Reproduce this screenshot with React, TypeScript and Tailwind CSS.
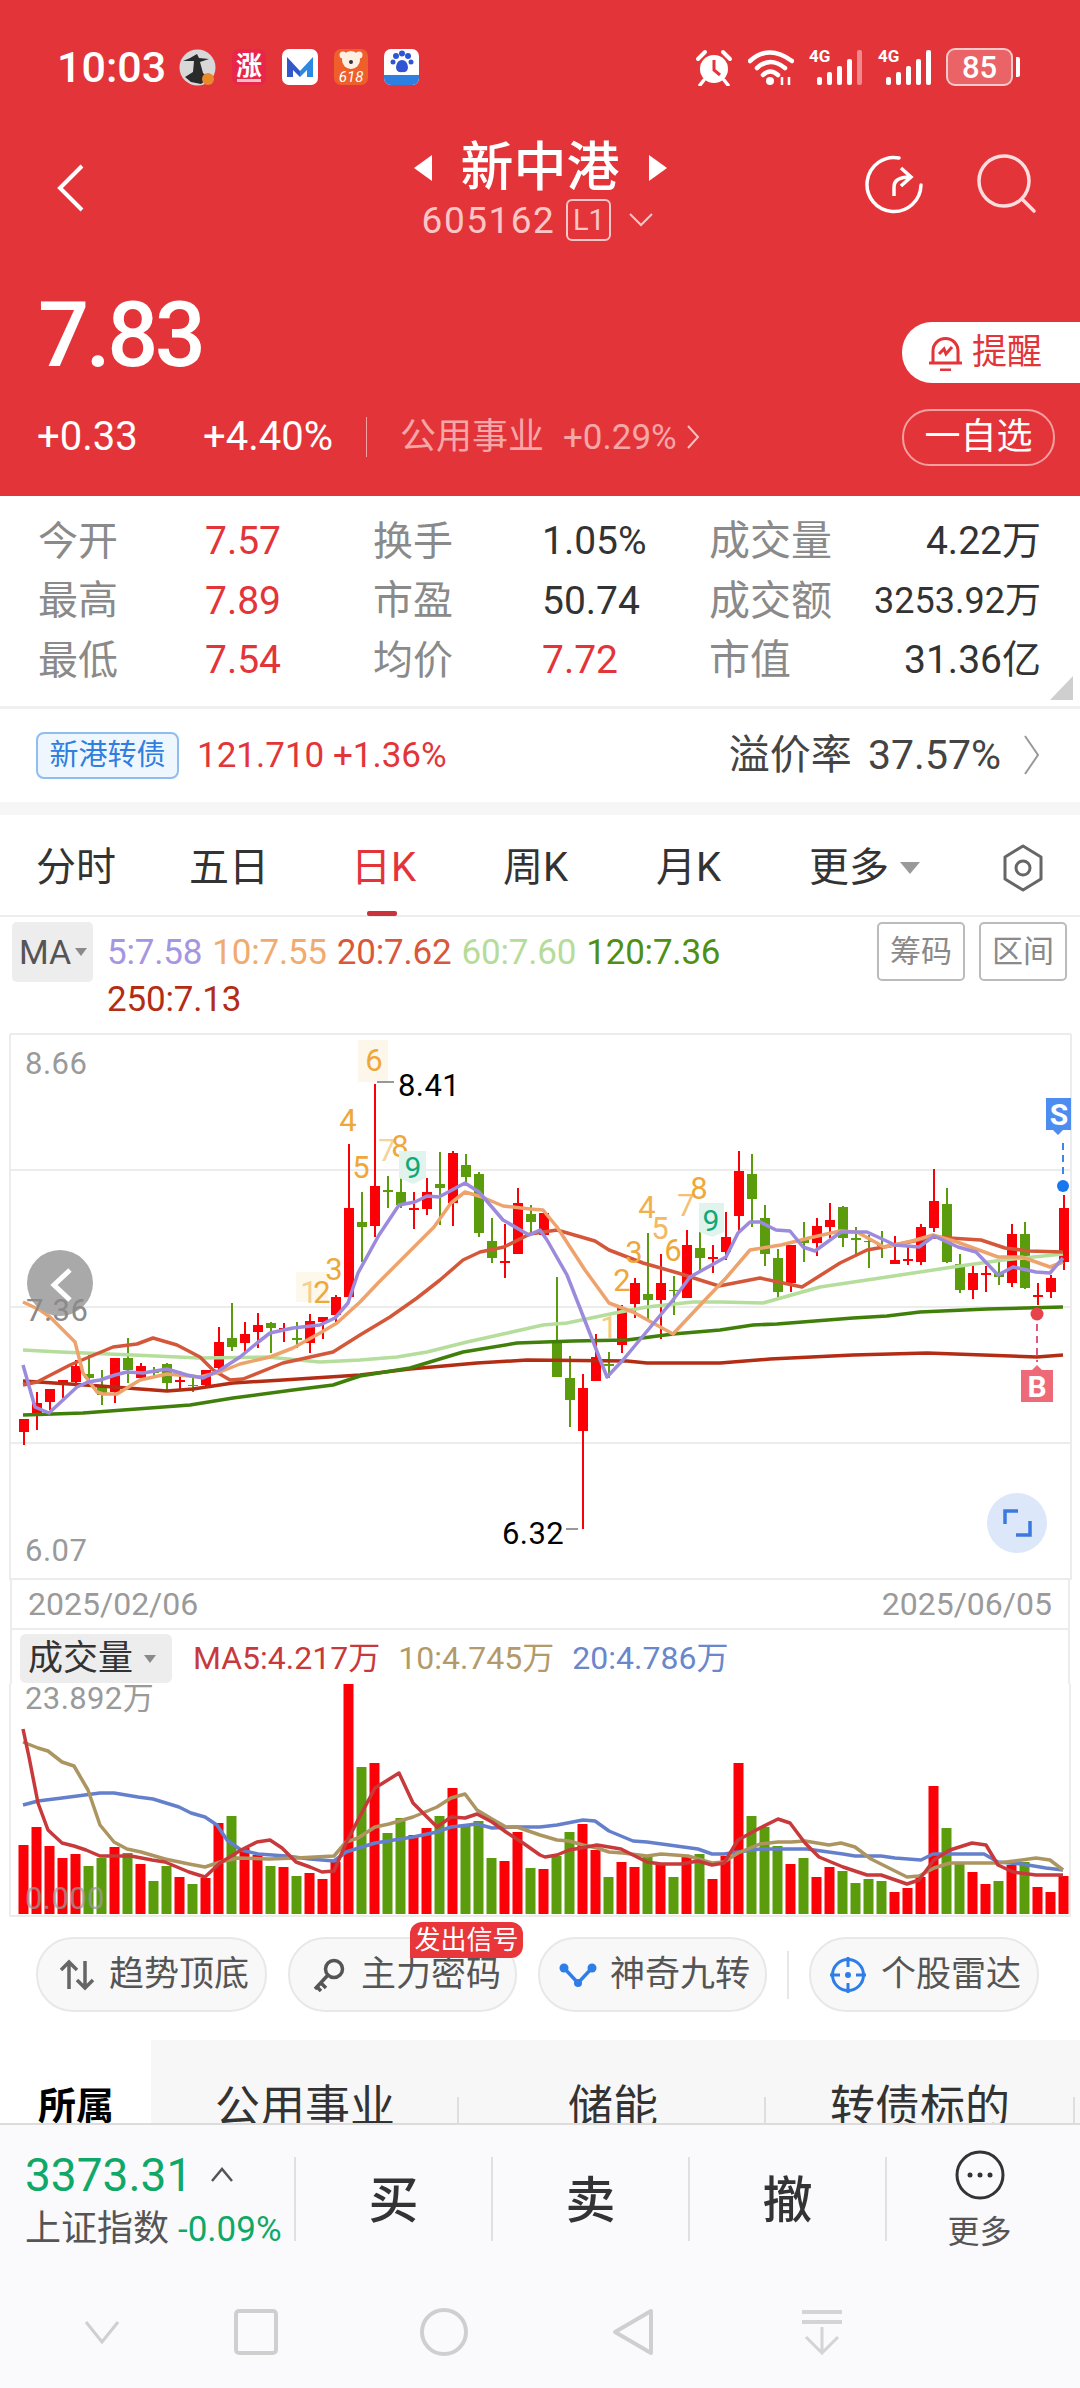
import { ReactNode } from "react";

const RED = "#fb0006";
const GREEN = "#5a9c0c";

// [colour, high, body top, body bottom, low] in page pixels
const candles: [string, number, number, number, number][] = [
  ["r", 1419, 1419, 1432, 1445], ["r", 1392, 1403, 1415, 1430], ["r", 1389, 1389, 1402, 1410], ["r", 1380, 1380, 1385, 1398],
  ["r", 1360, 1366, 1382, 1387], ["g", 1355, 1374, 1378, 1380], ["g", 1370, 1385, 1395, 1405], ["r", 1358, 1358, 1392, 1403],
  ["g", 1338, 1358, 1370, 1383], ["r", 1363, 1366, 1378, 1378], ["g", 1367, 1372, 1373, 1378], ["g", 1363, 1364, 1383, 1390],
  ["r", 1371, 1380, 1382, 1390], ["g", 1378, 1385, 1386, 1392], ["r", 1370, 1370, 1385, 1387], ["r", 1327, 1342, 1368, 1372],
  ["g", 1303, 1338, 1347, 1351], ["r", 1322, 1334, 1343, 1352], ["r", 1313, 1325, 1332, 1348], ["g", 1322, 1323, 1328, 1353],
  ["r", 1323, 1328, 1330, 1342], ["g", 1322, 1338, 1340, 1348], ["r", 1314, 1321, 1343, 1353], ["r", 1317, 1317, 1322, 1339],
  ["r", 1295, 1297, 1315, 1323], ["r", 1144, 1208, 1297, 1303], ["g", 1192, 1222, 1227, 1262], ["r", 1084, 1186, 1226, 1237],
  ["g", 1176, 1190, 1192, 1208], ["g", 1169, 1192, 1205, 1208], ["r", 1192, 1208, 1210, 1229], ["r", 1178, 1192, 1209, 1215],
  ["g", 1152, 1184, 1188, 1225], ["r", 1151, 1153, 1203, 1226], ["g", 1154, 1165, 1177, 1185], ["g", 1172, 1174, 1233, 1237],
  ["g", 1218, 1241, 1258, 1263], ["r", 1224, 1261, 1263, 1278], ["r", 1188, 1203, 1254, 1254], ["g", 1205, 1214, 1222, 1232],
  ["r", 1213, 1213, 1235, 1235], ["g", 1277, 1340, 1377, 1377], ["g", 1356, 1378, 1400, 1427], ["r", 1374, 1388, 1431, 1529],
  ["r", 1334, 1357, 1381, 1381], ["g", 1352, 1364, 1366, 1378], ["r", 1305, 1308, 1345, 1353], ["r", 1278, 1283, 1304, 1318],
  ["g", 1233, 1294, 1300, 1320], ["r", 1254, 1283, 1300, 1339], ["g", 1276, 1290, 1291, 1315], ["r", 1230, 1245, 1298, 1298],
  ["g", 1213, 1248, 1258, 1272], ["r", 1245, 1257, 1259, 1273], ["r", 1212, 1237, 1252, 1260], ["r", 1151, 1171, 1216, 1233],
  ["g", 1154, 1174, 1199, 1227], ["g", 1205, 1218, 1254, 1266], ["g", 1249, 1258, 1292, 1297], ["r", 1245, 1245, 1283, 1292],
  ["g", 1222, 1240, 1243, 1262], ["r", 1218, 1226, 1243, 1256], ["r", 1203, 1220, 1227, 1238], ["g", 1206, 1207, 1238, 1247],
  ["g", 1227, 1238, 1240, 1255], ["g", 1235, 1241, 1242, 1268], ["g", 1231, 1245, 1246, 1258], ["r", 1236, 1260, 1264, 1264],
  ["r", 1245, 1259, 1261, 1265], ["r", 1224, 1227, 1262, 1265], ["r", 1169, 1201, 1228, 1232], ["g", 1188, 1204, 1262, 1263],
  ["g", 1254, 1264, 1290, 1293], ["r", 1266, 1273, 1290, 1299], ["r", 1266, 1273, 1275, 1292], ["g", 1262, 1273, 1277, 1285],
  ["r", 1224, 1234, 1283, 1287], ["g", 1222, 1234, 1288, 1289], ["r", 1283, 1295, 1297, 1305], ["r", 1275, 1278, 1292, 1298],
  ["r", 1195, 1208, 1262, 1270],
];

const ma5 = "23,1365 35,1407 49,1413 77,1387 88,1382 100,1380 115,1375 127,1372 143,1373 167,1369 187,1375 203,1378 220,1370 240,1357 257,1343 270,1333 293,1328 320,1325 335,1318 348,1303 358,1273 379,1235 399,1205 415,1202 427,1196 439,1197 465,1183 479,1192 503,1220 529,1235 540,1230 547,1240 567,1275 607,1377 623,1360 673,1300 690,1277 726,1257 738,1233 750,1222 760,1222 776,1230 790,1231 803,1247 815,1251 841,1232 867,1232 895,1245 919,1247 934,1236 958,1247 976,1252 998,1275 1013,1267 1036,1272 1050,1273 1063,1258";
const ma10 = "23,1302 40,1310 50,1317 75,1342 83,1373 97,1392 103,1394 117,1394 140,1380 167,1374 200,1377 220,1372 240,1364 270,1357 293,1348 320,1333 337,1323 360,1302 379,1282 413,1248 434,1227 451,1203 465,1192 482,1197 503,1206 530,1209 543,1210 557,1227 585,1270 609,1303 633,1312 673,1334 705,1300 726,1278 750,1250 781,1245 809,1238 840,1231 857,1232 884,1247 912,1241 933,1235 957,1242 998,1257 1022,1257 1050,1267 1063,1262";
const ma20 = "23,1385 37,1382 70,1365 113,1347 137,1344 153,1338 177,1345 200,1357 213,1370 230,1380 243,1379 283,1363 333,1352 360,1335 390,1317 417,1298 440,1280 463,1260 480,1252 504,1247 530,1234 557,1230 595,1241 609,1250 643,1263 678,1273 719,1286 760,1278 802,1287 840,1263 867,1250 895,1245 933,1237 981,1240 1005,1248 1029,1251 1063,1252";
const ma60 = "23,1350 60,1352 133,1355 200,1358 267,1357 320,1362 360,1360 397,1357 427,1352 467,1342 503,1334 543,1325 567,1323 620,1312 647,1307 693,1302 720,1302 763,1303 820,1287 887,1277 953,1267 1003,1260 1063,1254";
const ma120 = "23,1415 83,1413 190,1405 233,1398 293,1390 333,1385 360,1376 410,1368 463,1352 517,1343 573,1341 627,1340 673,1334 720,1330 753,1325 777,1324 853,1318 887,1316 920,1312 987,1309 1063,1307";
const ma250 = "23,1381 100,1386 167,1391 193,1389 233,1383 283,1380 360,1375 410,1369 477,1363 527,1360 627,1361 647,1363 720,1363 770,1359 853,1355 927,1353 1037,1357 1063,1355";

const volumes: [string, number][] = [
  ["r", 1845], ["r", 1827], ["r", 1846], ["r", 1858], ["r", 1854], ["g", 1866], ["g", 1858], ["r", 1847], ["g", 1853], ["r", 1864],
  ["g", 1881], ["g", 1866], ["r", 1877], ["g", 1884], ["r", 1878], ["r", 1823], ["g", 1816], ["r", 1848], ["r", 1855], ["g", 1866],
  ["r", 1867], ["g", 1876], ["r", 1873], ["r", 1879], ["r", 1862], ["r", 1683], ["g", 1767], ["r", 1763], ["g", 1833], ["g", 1818],
  ["r", 1835], ["r", 1828], ["g", 1816], ["r", 1788], ["g", 1825], ["g", 1821], ["g", 1858], ["r", 1861], ["r", 1832], ["g", 1868],
  ["r", 1869], ["g", 1856], ["g", 1832], ["r", 1824], ["r", 1850], ["g", 1877], ["r", 1862], ["r", 1867], ["g", 1857], ["r", 1865],
  ["g", 1877], ["r", 1857], ["g", 1854], ["r", 1879], ["r", 1856], ["r", 1763], ["g", 1816], ["g", 1827], ["g", 1846], ["r", 1864],
  ["g", 1858], ["r", 1877], ["r", 1867], ["g", 1871], ["g", 1883], ["g", 1879], ["g", 1881], ["r", 1892], ["r", 1888], ["r", 1877],
  ["r", 1786], ["g", 1828], ["g", 1862], ["r", 1872], ["r", 1884], ["g", 1881], ["r", 1865], ["g", 1862], ["r", 1887], ["r", 1892],
  ["r", 1876],
];

const vol5 = "23,1729 29,1757 38,1803 48,1830 62,1843 74,1846 86,1850 100,1856 114,1856 131,1856 152,1860 165,1862 189,1872 205,1877 220,1863 241,1850 257,1842 270,1840 282,1848 296,1862 310,1867 322,1872 334,1871 346,1843 358,1820 375,1788 399,1773 413,1803 437,1827 451,1817 465,1818 477,1814 492,1822 506,1832 523,1843 540,1855 545,1857 557,1855 569,1850 581,1848 597,1845 621,1849 647,1862 661,1864 681,1864 698,1861 712,1865 724,1863 738,1840 760,1828 778,1819 790,1823 805,1843 819,1857 843,1867 867,1875 881,1875 907,1884 919,1880 934,1860 950,1850 972,1843 986,1845 998,1865 1013,1872 1036,1875 1063,1875";
const vol10 = "23,1742 38,1748 48,1751 62,1762 74,1766 88,1790 100,1825 114,1842 127,1849 141,1852 165,1859 189,1864 205,1867 220,1862 238,1858 269,1859 296,1858 334,1856 346,1842 358,1838 375,1827 389,1824 413,1817 437,1807 451,1798 465,1794 477,1810 492,1819 506,1827 517,1827 540,1835 557,1840 569,1841 583,1845 597,1848 609,1852 623,1853 647,1856 661,1854 688,1856 712,1863 724,1862 738,1853 760,1844 778,1842 791,1842 805,1841 829,1845 841,1843 855,1847 871,1859 895,1871 907,1877 919,1876 934,1868 950,1863 998,1863 1022,1860 1036,1858 1050,1860 1063,1870";
const vol20 = "23,1805 38,1801 62,1798 100,1793 114,1793 138,1797 153,1799 179,1807 191,1813 205,1817 217,1825 227,1840 241,1850 258,1854 286,1856 310,1859 334,1861 346,1852 375,1843 413,1837 437,1832 451,1827 477,1824 492,1828 517,1827 540,1827 557,1825 583,1820 595,1821 609,1831 633,1841 647,1842 669,1845 698,1849 712,1854 724,1854 738,1852 760,1849 807,1849 843,1854 855,1856 881,1856 895,1858 921,1860 933,1854 984,1854 998,1862 1022,1864 1046,1868 1063,1870";

const Tab = ({ children, active }: { children: ReactNode; active?: boolean }) => (
  <span className={active ? "text-[#e33539]" : "text-[#333]"}>{children}</span>
);

function AppIcons() {
  return (
    <div className="flex items-center ml-[13px] gap-[16px]">
      {/* avatar */}
      <svg width="37" height="37" viewBox="0 0 37 37">
        <circle cx="18.5" cy="18.5" r="18" fill="#d8d8d8" />
        <path d="M4 12 Q12 9 18 5 L20 9 L30 10 L21 13 L24 24 L30 29 L22 35 L12 33 L6 28 L14 23 L15 12 Z" fill="#2a2a2a" />
        <circle cx="29" cy="30" r="6" fill="#e8892c" />
      </svg>
      <div className="w-[34px] h-[36px] rounded-[7px] bg-[#e8264a] flex flex-col items-center justify-center text-white">
        <span className="text-[26px] leading-[26px] font-bold">涨</span>
        <div className="w-[24px] h-[3px] bg-[#f9c0c8]" />
      </div>
      <div className="w-[36px] h-[36px] rounded-[7px] bg-white flex items-center justify-center">
        <svg width="28" height="22" viewBox="0 0 28 22">
          <path d="M1 1 L14 15 L14 21 L7 14 L7 21 L1 21 Z" fill="#3458c8" />
          <path d="M27 1 L14 15 L14 21 L21 14 L21 21 L27 21 Z" fill="#2d88e0" />
        </svg>
      </div>
      <div className="w-[34px] h-[36px] rounded-[7px] bg-[#ee5f2c] flex flex-col items-center overflow-hidden">
        <svg width="26" height="21" viewBox="0 0 26 21">
          <circle cx="13" cy="11" r="9" fill="#fff0e4" />
          <circle cx="5" cy="6" r="3.5" fill="#fff0e4" />
          <circle cx="21" cy="6" r="3.5" fill="#fff0e4" />
          <circle cx="13" cy="13" r="2" fill="#333" />
        </svg>
        <span className="text-white text-[15px] leading-[15px] italic">618</span>
      </div>
      <div className="w-[35px] h-[36px] rounded-[7px] bg-white flex flex-col items-center overflow-hidden">
        <svg width="24" height="26" viewBox="0 0 24 26">
          <circle cx="6" cy="7" r="3" fill="#2f55d4" />
          <circle cx="12" cy="4.5" r="3" fill="#2f55d4" />
          <circle cx="18" cy="7" r="3" fill="#2f55d4" />
          <circle cx="3" cy="13" r="2.5" fill="#2f55d4" />
          <circle cx="21" cy="13" r="2.5" fill="#2f55d4" />
          <path d="M6 18 Q7 11 12 11 Q17 11 18 18 Q18 24 12 23 Q6 24 6 18 Z" fill="#2f55d4" />
        </svg>
        <div className="w-full h-[10px] bg-[#2f7fe0]" />
      </div>
    </div>
  );
}

function Signal({ dim }: { dim?: boolean }) {
  return (
    <div className="relative w-[54px] h-[38px]">
      <span className="absolute left-0 top-[-1px] text-white text-[17px] leading-[18px] font-bold">4G</span>
      <svg className="absolute left-0 top-0" width="54" height="38" viewBox="0 0 54 38">
        <rect x="8" y="29" width="5" height="8" rx="2" fill="#fff" />
        <rect x="18" y="24" width="5" height="13" rx="2" fill="#fff" />
        <rect x="28" y="18" width="5" height="19" rx="2" fill="#fff" />
        <rect x="38" y="11" width="5" height="26" rx="2" fill="#fff" />
        <rect x="48" y="2" width="5" height="35" rx="2" fill={dim ? "#f08a8c" : "#fff"} />
      </svg>
    </div>
  );
}

function StatusBar() {
  return (
    <div className="flex items-center h-[38px] mt-[48px] pl-[57px] pr-[60px] text-white">
      <span className="text-[43px] leading-none font-medium">10:03</span>
      <AppIcons />
      <div className="flex-1" />
      <div className="flex items-center gap-[15px]">
        <svg width="38" height="38" viewBox="0 0 38 38">
          <circle cx="19" cy="21" r="14" fill="#fff" />
          <path d="M19 12 V22 L25 27" stroke="#e33539" strokeWidth="3" fill="none" />
          <path d="M3 11 L10 4 M35 11 L28 4" stroke="#fff" strokeWidth="4" strokeLinecap="round" />
          <path d="M9 32 L5 37 M29 32 L33 37" stroke="#fff" strokeWidth="3.5" strokeLinecap="round" />
        </svg>
        <svg width="46" height="38" viewBox="0 0 46 38">
          <path d="M2 13 Q21 -4 44 13" stroke="#fff" strokeWidth="4.5" fill="none" strokeLinecap="round" />
          <path d="M9 20 Q22 8 37 20" stroke="#fff" strokeWidth="4.5" fill="none" strokeLinecap="round" />
          <path d="M15 27 Q22 20 30 27" stroke="#fff" strokeWidth="4.5" fill="none" strokeLinecap="round" />
          <circle cx="22" cy="33" r="4" fill="#fff" />
          <path d="M34 29 V37 M41 29 V37" stroke="#fff" strokeWidth="2.5" />
        </svg>
        <Signal dim />
        <Signal />
        <div className="flex items-center ml-[-1px]">
          <div className="w-[67px] h-[38px] rounded-[9px] border-[2.5px] border-[#f7c9ca] bg-[#ea6467] flex items-center justify-center text-[31px] leading-none font-medium">85</div>
          <div className="w-[4px] h-[20px] ml-[3px] rounded-r-[2px] bg-[#fff]" />
        </div>
      </div>
    </div>
  );
}

function Header() {
  return (
    <header className="h-[496px] bg-[#e33539] text-white flex flex-col">
      <StatusBar />
      <div className="relative h-[125px] mt-[49px]">
        <svg className="absolute left-[56px] top-[28px]" width="30" height="50" viewBox="0 0 30 50">
          <path d="M26 3 L4 25 L26 47" stroke="#fff" strokeWidth="4" fill="none" />
        </svg>
        <div className="flex flex-col items-center">
          <div className="flex items-center gap-[28px] h-[66px]">
            <svg width="20" height="28" viewBox="0 0 20 28"><path d="M19 1 V27 L1 14 Z" fill="#fff" /></svg>
            <span className="text-[53px] leading-none font-medium">新中港</span>
            <svg width="20" height="28" viewBox="0 0 20 28"><path d="M1 1 V27 L19 14 Z" fill="#fff" /></svg>
          </div>
          <div className="flex items-center mt-[-3px] h-[44px] text-[#f9c6c7] mr-[4px]">
            <span className="text-[37px] leading-none tracking-[1.5px]">605162</span>
            <span className="ml-[11px] w-[45px] h-[42px] rounded-[6px] border-2 border-[#f9c6c7] flex items-center justify-center text-[29px] leading-none">L1</span>
            <svg className="ml-[17px]" width="26" height="14" viewBox="0 0 26 14"><path d="M2 1 L13 12 L24 1" stroke="#f9c6c7" strokeWidth="2" fill="none" /></svg>
          </div>
        </div>
        <svg className="absolute left-[864px] top-[19px]" width="62" height="62" viewBox="0 0 62 62">
          <path d="M35 4 A27 27 0 1 0 57 31" stroke="#fff" strokeWidth="3.5" fill="none" strokeLinecap="round" />
          <path d="M30 42 V33 Q30 23 46 23 M37 14 L47 23 L37 32" stroke="#fff" strokeWidth="3.5" fill="none" />
        </svg>
        <svg className="absolute left-[976px] top-[18px]" width="62" height="62" viewBox="0 0 62 62">
          <circle cx="28" cy="28" r="25" stroke="#fcdcdc" strokeWidth="3.5" fill="none" />
          <path d="M46 46 L58 58" stroke="#fcdcdc" strokeWidth="3.5" strokeLinecap="round" />
        </svg>
      </div>
      <div className="flex justify-between items-start h-[79px] mt-[44px]">
        <span className="ml-[38px] mt-[1px] text-[90px] leading-[62px] h-[62px] font-medium tracking-[-3.5px]">7.83</span>
        <div className="w-[178px] h-[61px] mt-[18px] rounded-l-[30px] bg-white flex items-center text-[#e33539]">
          <svg className="ml-[27px]" width="33" height="36" viewBox="0 0 33 36">
            <path d="M4 28 V16 A12.5 12.5 0 0 1 29 16 V28 Z M1 28 H32" stroke="#e33539" strokeWidth="3" fill="none" strokeLinecap="round" />
            <path d="M11 35 H22 M10 19 L15 14 L17 19 L23 12" stroke="#e33539" strokeWidth="3" fill="none" />
          </svg>
          <span className="ml-[10px] text-[35px] leading-none">提醒</span>
        </div>
      </div>
      <div className="flex items-center h-[58px] mt-[25px]">
        <span className="ml-[37px] text-[40px] leading-none w-[166px]">+0.33</span>
        <span className="text-[40px] leading-none w-[163px]">+4.40%</span>
        <div className="w-[1px] h-[40px] bg-[#f2a2a3]" />
        <span className="ml-[33px] text-[36px] leading-none text-[#f5a7a8]">公用事业</span>
        <span className="ml-[19px] text-[35px] leading-none text-[#f5a7a8]">+0.29%</span>
        <svg className="ml-[9px]" width="14" height="28" viewBox="0 0 14 28"><path d="M2 3 L12 14 L2 25" stroke="#f5c0c0" strokeWidth="2" fill="none" /></svg>
        <div className="flex-1" />
        <div className="mr-[25px] w-[153px] h-[57px] rounded-[28px] border-2 border-[#f4a0a1] flex items-center justify-center text-[36px] leading-none">一自选</div>
      </div>
    </header>
  );
}

const rows: [string, string, string, string, string, string, boolean, boolean][] = [
  ["今开", "7.57", "换手", "1.05%", "成交量", "4.22万", false, false],
  ["最高", "7.89", "市盈", "50.74", "成交额", "3253.92万", false, true],
  ["最低", "7.54", "均价", "7.72", "市值", "31.36亿", true, false],
];

function QuoteTable() {
  return (
    <section className="relative h-[213px] border-b-[3px] border-[#f0f0f0] pt-[16px] pl-[38px] pr-[39px]">
      <div className="grid grid-cols-[167px_168px_169px_167px_124px_1fr] auto-rows-[59.5px] items-center">
        {rows.map((r) => (
          <div key={r[0]} className="contents">
            <span className="text-[40px] leading-none text-[#8a8a8a]">{r[0]}</span>
            <span className="text-[39px] leading-none text-[#e33539]">{r[1]}</span>
            <span className="text-[40px] leading-none text-[#8a8a8a]">{r[2]}</span>
            <span className={`text-[39px] leading-none ${r[6] ? "text-[#e33539]" : "text-[#333]"}`}>{r[3]}</span>
            <span className="text-[41px] leading-none text-[#8a8a8a]">{r[4]}</span>
            <span className={`text-right leading-none text-[#333] ${r[7] ? "text-[36px]" : "text-[39px]"}`}>{r[5]}</span>
          </div>
        ))}
      </div>
      <svg className="absolute left-[1050px] top-[180px]" width="24" height="24" viewBox="0 0 24 24"><path d="M23 0 V24 H0 Z" fill="#cfcfcf" /></svg>
    </section>
  );
}

function BondRow() {
  return (
    <section className="h-[93px] flex items-center pl-[36px] pr-[39px] pb-[1px]">
      <div className="w-[143px] h-[47px] rounded-[8px] border-2 border-[#8fbdf0] bg-[#eef6fe] flex items-center justify-center text-[29px] leading-none text-[#2f7ee0]">新港转债</div>
      <span className="ml-[18px] text-[35px] leading-none text-[#e33539]">121.710 +1.36%</span>
      <div className="flex-1" />
      <span className="text-[41px] leading-none text-[#444] [word-spacing:6px]">溢价率 37.57%</span>
      <svg className="ml-[22px]" width="18" height="42" viewBox="0 0 18 42"><path d="M2 2 L15 21 L2 40" stroke="#999" strokeWidth="2" fill="none" /></svg>
    </section>
  );
}

function PeriodTabs() {
  return (
    <section className="relative h-[102px] border-b-2 border-[#ececec] text-[40px] leading-none">
      <div className="flex items-center h-[100px] pt-[6px]">
        <div className="w-[189px] pl-[36px]"><Tab>分时</Tab></div>
        <div className="w-[162px]"><Tab>五日</Tab></div>
        <div className="w-[152px]"><Tab active>日K</Tab></div>
        <div className="w-[153px]"><Tab>周K</Tab></div>
        <div className="w-[153px]"><Tab>月K</Tab></div>
        <div className="flex items-center w-[193px]">
          <Tab>更多</Tab>
          <svg className="ml-[10px]" width="22" height="14" viewBox="0 0 22 14"><path d="M1 1 H21 L11 13 Z" fill="#9a9a9a" /></svg>
        </div>
        <svg width="42" height="48" viewBox="0 0 42 48">
          <path d="M21 2 L39 13 V35 L21 46 L3 35 V13 Z" stroke="#666" strokeWidth="3" fill="none" strokeLinejoin="round" />
          <circle cx="21" cy="24" r="7" stroke="#666" strokeWidth="3" fill="none" />
        </svg>
      </div>
      <div className="absolute left-[367px] bottom-[-1px] w-[30px] h-[5px] rounded-[2px] bg-[#c9333c]" />
    </section>
  );
}

function MaLegend() {
  return (
    <section className="h-[116px] flex pt-[5px] pl-[12px] pr-[13px]">
      <div className="w-[81px] h-[60px] rounded-[5px] bg-[#ededed] flex items-center pl-[7px] text-[34px] leading-none text-[#555]">
        MA
        <svg className="ml-[3px]" width="14" height="10" viewBox="0 0 14 10"><path d="M1 1 H13 L7 9 Z" fill="#8a8a8a" /></svg>
      </div>
      <div className="ml-[14px] w-[770px] flex flex-wrap gap-x-[10px] text-[35px] leading-[47px] pt-[7px] content-start tracking-[-0.2px]">
        <span className="text-[#a596e2]">5:7.58</span>
        <span className="text-[#f0ab6e]">10:7.55</span>
        <span className="text-[#d9583a]">20:7.62</span>
        <span className="text-[#b6dc9a]">60:7.60</span>
        <span className="text-[#4f8f12]">120:7.36</span>
        <span className="text-[#b32c14] w-full">250:7.13</span>
      </div>
      <div className="flex-1" />
      <div className="flex gap-[14px]">
        <div className="w-[88px] h-[59px] rounded-[5px] border-2 border-[#bbb] flex items-center justify-center text-[31px] leading-none text-[#8a8a8a]">筹码</div>
        <div className="w-[88px] h-[59px] rounded-[5px] border-2 border-[#bbb] flex items-center justify-center text-[31px] leading-none text-[#8a8a8a]">区间</div>
      </div>
    </section>
  );
}

const seqColor = "#eea83a";
const seqLabels: [string, number, number, number][] = [
  ["6", 374, 1060, 1], ["4", 348, 1120, 1], ["5", 361, 1167, 1], ["7", 387, 1150, 0.5], ["8", 400, 1146, 1],
  ["3", 334, 1269, 1], ["2", 322, 1292, 1], ["1", 309, 1292, 0.5],
  ["1", 609, 1327, 0.6], ["2", 622, 1280, 1], ["3", 634, 1252, 1], ["4", 647, 1207, 0.9], ["5", 660, 1228, 0.8],
  ["6", 673, 1250, 1], ["7", 686, 1205, 0.7], ["8", 699, 1188, 1],
];

function KChart() {
  const num = { fontFamily: "Roboto, sans-serif" };
  return (
    <svg className="block w-[1080px] h-[547px]" viewBox="0 1033 1080 547" style={num}>
      <path d="M10 1034 H1071 M10 1034 V1580 M1071 1034 V1580 M10 1579 H1071" stroke="#ececec" strokeWidth="2" fill="none" />
      <path d="M10 1170 H1071 M10 1307 H1071 M10 1443 H1071" stroke="#ececec" strokeWidth="2" fill="none" />
      <text x="25" y="1074" fontSize="31" fill="#9a9a9a" letterSpacing="0.5">8.66</text>
      <text x="25" y="1561" fontSize="31" fill="#9a9a9a" letterSpacing="0.5">6.07</text>
      <rect x="358" y="1040" width="30" height="42" fill="#fdf6ea" />
      <rect x="296" y="1272" width="32" height="30" fill="#fdf7ec" />
      {candles.map(([c, h, t, b, l], i) => {
        const x = 24 + 13 * i;
        const fill = c === "r" ? RED : GREEN;
        return (
          <g key={i} fill={fill}>
            <rect x={x - 1} y={h} width="2" height={l - h} />
            <rect x={x - 5} y={t} width="10" height={b - t} />
          </g>
        );
      })}
      <polyline points={ma250} fill="none" stroke="#b32c14" strokeWidth="3.5" strokeLinejoin="round" />
      <polyline points={ma120} fill="none" stroke="#3f7f0a" strokeWidth="3.5" strokeLinejoin="round" />
      <polyline points={ma60} fill="none" stroke="#b5dd9b" strokeWidth="3.5" strokeLinejoin="round" />
      <polyline points={ma20} fill="none" stroke="#d4573a" strokeWidth="3.5" strokeLinejoin="round" />
      <polyline points={ma10} fill="none" stroke="#eea36c" strokeWidth="3.5" strokeLinejoin="round" />
      <polyline points={ma5} fill="none" stroke="#9c8bdc" strokeWidth="3.5" strokeLinejoin="round" />

      <circle cx="60" cy="1283" r="33" fill="#a9a9a9" />
      <path d="M70 1270 L54 1285 L70 1300" stroke="#fff" strokeWidth="5" fill="none" />
      <text x="26" y="1321" fontSize="31" fill="#8a8a8a" letterSpacing="0.5">7.36</text>

      {seqLabels.map(([t, x, y, o], i) => (
        <text key={i} x={x} y={y + 11} fontSize="31" fill={seqColor} opacity={o} textAnchor="middle">{t}</text>
      ))}
      <path d="M399 1151 H426 V1178 L413 1184 L399 1178 Z" fill="#e0f3ec" />
      <text x="413" y="1178" fontSize="30" fill="#10a878" textAnchor="middle">9</text>
      <path d="M699 1203 H724 V1232 L712 1237 L699 1232 Z" fill="#e0f3ec" />
      <text x="711" y="1231" fontSize="30" fill="#10a878" textAnchor="middle">9</text>

      <path d="M377 1082 H394" stroke="#777" strokeWidth="1.5" />
      <text x="398" y="1096" fontSize="31" fill="#000" letterSpacing="0.4">8.41</text>
      <path d="M566 1529 H578" stroke="#777" strokeWidth="1.5" />
      <text x="502" y="1544" fontSize="31" fill="#000" letterSpacing="0.4">6.32</text>

      <path d="M1046 1098 H1071 V1130 H1063 L1058 1135 L1053 1130 H1046 Z" fill="#4d8df0" />
      <text x="1059" y="1125" fontSize="30" fontWeight="700" fill="#fff" textAnchor="middle">S</text>
      <path d="M1063 1143 V1176" stroke="#3c86ee" strokeWidth="2" strokeDasharray="7 5" />
      <circle cx="1063" cy="1186" r="6" fill="#1677ee" />

      <circle cx="1037" cy="1314" r="6.5" fill="#e8434a" />
      <path d="M1037 1324 V1362" stroke="#e0567e" strokeWidth="2" strokeDasharray="7 5" />
      <path d="M1021 1370 H1032 L1037 1365 L1042 1370 H1053 V1402 H1021 Z" fill="#ee6a78" />
      <text x="1037" y="1397" fontSize="30" fontWeight="700" fill="#fff" textAnchor="middle">B</text>

      <circle cx="1017" cy="1523" r="30" fill="#dce8fa" />
      <path d="M1018 1511 H1005 V1524 M1016 1535 H1030 V1521" stroke="#3b78e0" strokeWidth="3.5" fill="none" />
    </svg>
  );
}

function VolumeChart() {
  return (
    <svg className="block w-[1080px] h-[234px]" viewBox="0 1684 1080 234" style={{ fontFamily: "Roboto, 'Noto Sans CJK SC', sans-serif" }}>
      <path d="M10 1684 V1917 M1070 1684 V1917 M10 1916 H1071" stroke="#ececec" strokeWidth="2" fill="none" />
      {volumes.map(([c, top], i) => (
        <rect key={i} x={18.5 + 13 * i} y={top} width="10" height={1914 - top} fill={c === "r" ? RED : GREEN} />
      ))}
      <polyline points={vol20} fill="none" stroke="#6480cc" strokeWidth="3.5" strokeLinejoin="round" />
      <polyline points={vol10} fill="none" stroke="#ac9560" strokeWidth="3.5" strokeLinejoin="round" />
      <polyline points={vol5} fill="none" stroke="#c8393b" strokeWidth="3.5" strokeLinejoin="round" />
      <text x="25" y="1709" fontSize="31" fill="#9a9a9a" letterSpacing="0.4">23.892万</text>
      <text x="25" y="1909" fontSize="31" fill="#9a9a9a" opacity="0.75" letterSpacing="0.4">0.000</text>
    </svg>
  );
}

function Pill({ w, pl, icon, label }: { w: string; pl: string; icon: ReactNode; label: string }) {
  return (
    <div className={`${w} ${pl} h-[75px] rounded-[37px] border-2 border-[#e8e8e8] bg-[#f8f8f8] flex items-center text-[35px] leading-none text-[#555]`}>
      {icon}
      <span>{label}</span>
    </div>
  );
}

function Tools() {
  return (
    <section className="relative h-[122px] pt-[19px] pl-[36px] flex items-start gap-[21px]">
      <Pill
        w="w-[231px]"
        pl="pl-[21px]"
        label="趋势顶底"
        icon={
          <svg className="mr-[14px]" width="36" height="32" viewBox="0 0 36 32">
            <path d="M10 30 V3 M2 11 L10 3 L18 11" stroke="#666" strokeWidth="3.5" fill="none" />
            <path d="M26 2 V29 M18 21 L26 29 L34 21" stroke="#666" strokeWidth="3.5" fill="none" />
          </svg>
        }
      />
      <Pill
        w="w-[229px]"
        pl="pl-[22px]"
        label="主力密码"
        icon={
          <svg className="mr-[15px]" width="34" height="34" viewBox="0 0 34 34">
            <circle cx="22" cy="11" r="8.5" stroke="#555" strokeWidth="3.5" fill="none" />
            <path d="M16 17 L3 31 M9 25 L14 30 M5 29 L9 33" stroke="#555" strokeWidth="3.5" fill="none" />
          </svg>
        }
      />
      <Pill
        w="w-[229px]"
        pl="pl-[19px]"
        label="神奇九转"
        icon={
          <svg className="mr-[13px]" width="38" height="24" viewBox="0 0 38 24">
            <path d="M5 5 L19 20 L33 5" stroke="#2f7ee8" strokeWidth="3.5" fill="none" />
            <circle cx="5" cy="5" r="4.5" fill="#2f7ee8" />
            <circle cx="33" cy="5" r="4.5" fill="#2f7ee8" />
            <circle cx="19" cy="20" r="4" fill="#2f7ee8" />
          </svg>
        }
      />
      <div className="w-[2px] h-[48px] mt-[14px] bg-[#e8e8e8] mr-[-1px] ml-[-1px]" />
      <Pill
        w="w-[230px]"
        pl="pl-[19px]"
        label="个股雷达"
        icon={
          <svg className="mr-[15px]" width="36" height="36" viewBox="0 0 36 36">
            <circle cx="18" cy="18" r="15.5" stroke="#2f7ee8" strokeWidth="3" fill="none" />
            <path d="M18 0 V10 M18 26 V36 M0 18 H10 M26 18 H36" stroke="#2f7ee8" strokeWidth="3" />
            <circle cx="18" cy="18" r="3" fill="#2f7ee8" />
          </svg>
        }
      />
      <div className="absolute left-[410px] top-[4px] w-[113px] h-[36px] rounded-[12px] rounded-bl-none bg-[#e8363a] flex items-center justify-center text-[26px] leading-none text-white">发出信号</div>
    </section>
  );
}

function SectorTabs() {
  return (
    <section className="h-[83px] flex overflow-hidden text-[45px] leading-none text-[#333]">
      <div className="w-[151px] pl-[38px] pt-[47px] text-[38px] leading-none font-bold text-black">所属</div>
      <div className="flex-1 bg-[#f7f7f7] flex items-start pt-[45px] relative">
        <span className="ml-[64px]">公用事业</span>
        <div className="absolute left-[306px] bottom-0 w-[2px] h-[26px] bg-[#dedede]" />
        <span className="ml-[173px]">储能</span>
        <div className="absolute left-[613px] bottom-0 w-[2px] h-[26px] bg-[#dedede]" />
        <span className="ml-[172px]">转债标的</span>
        <div className="absolute left-[922px] bottom-0 w-[2px] h-[26px] bg-[#dedede]" />
      </div>
    </section>
  );
}

function BottomBar() {
  return (
    <footer className="h-[265px] bg-[#fafafc] border-t-2 border-[#dcdcdc]">
      <div className="flex h-[120px] pt-[32px] items-start">
        <div className="w-[294px] pl-[25px] h-[84px]">
          <div className="flex items-center h-[36px]">
            <span className="text-[46px] leading-none text-[#0fa869]">3373.31</span>
            <svg className="ml-[18px]" width="24" height="16" viewBox="0 0 24 16"><path d="M2 14 L12 2 L22 14" stroke="#555" strokeWidth="2.5" fill="none" /></svg>
          </div>
          <div className="flex items-center mt-[19px] h-[34px]">
            <span className="text-[36px] leading-none text-[#555]">上证指数</span>
            <span className="ml-[9px] text-[35px] leading-none text-[#0fa869]">-0.09%</span>
          </div>
        </div>
        {["买", "卖", "撤"].map((t) => (
          <div key={t} className="w-[197px] h-[84px] border-l-2 border-[#e0e0e0] flex items-center justify-center text-[50px] leading-none text-[#333] font-medium pt-[4px]">
            {t}
          </div>
        ))}
        <div className="flex-1 h-[84px] border-l-2 border-[#e0e0e0] flex flex-col items-center">
          <svg className="shrink-0 mt-[-7px] mr-[8px]" width="50" height="50" viewBox="0 0 50 50">
            <circle cx="25" cy="25" r="23" stroke="#333" strokeWidth="3" fill="none" />
            <circle cx="15" cy="25" r="2.5" fill="#333" />
            <circle cx="25" cy="25" r="2.5" fill="#333" />
            <circle cx="35" cy="25" r="2.5" fill="#333" />
          </svg>
          <span className="shrink-0 mt-[16px] mr-[8px] text-[32px] leading-none text-[#555]">更多</span>
        </div>
      </div>
      <div className="flex items-center h-[50px] mt-[62px] pl-[84px]">
        <svg width="36" height="24" viewBox="0 0 36 24"><path d="M2 2 L18 22 L34 2" stroke="#cfcfcf" strokeWidth="3" fill="none" /></svg>
        <svg className="ml-[114px]" width="44" height="46" viewBox="0 0 44 46"><rect x="2" y="2" width="40" height="42" rx="3" stroke="#cfcfcf" strokeWidth="4" fill="none" /></svg>
        <svg className="ml-[142px]" width="48" height="48" viewBox="0 0 48 48"><circle cx="24" cy="24" r="22" stroke="#cfcfcf" strokeWidth="4" fill="none" /></svg>
        <svg className="ml-[144px]" width="42" height="48" viewBox="0 0 42 48"><path d="M39 3 V45 L3 24 Z" stroke="#cfcfcf" strokeWidth="4" fill="none" strokeLinejoin="round" /></svg>
        <svg className="ml-[147px]" width="42" height="46" viewBox="0 0 42 46">
          <path d="M1 3 H41 M1 13 H41" stroke="#d4d4d4" strokeWidth="4" />
          <path d="M21 18 V42 M5 28 L21 44 L37 28" stroke="#d4d4d4" strokeWidth="3" fill="none" />
        </svg>
      </div>
    </footer>
  );
}

export default function App() {
  return (
    <div className="w-[1080px] h-[2388px] overflow-hidden bg-white font-['Roboto','Noto_Sans_CJK_SC',sans-serif]">
      <Header />
      <QuoteTable />
      <BondRow />
      <div className="h-[13px] bg-[#f6f6f6]" />
      <PeriodTabs />
      <MaLegend />
      <KChart />
      <div className="h-[48px] flex items-center justify-between px-[16px] border-x-2 border-[#ececec] mx-[10px] text-[32px] leading-none text-[#9a9a9a]">
        <span>2025/02/06</span>
        <span>2025/06/05</span>
      </div>
      <div className="h-[56px] mx-[10px] border-x-2 border-t-2 border-[#ececec] flex items-start pt-[4px] pl-[8px]">
        <div className="w-[152px] h-[49px] rounded-[6px] bg-[#ededed] flex items-center pl-[8px] text-[35px] leading-none text-[#333]">
          成交量
          <svg className="ml-[10px]" width="14" height="10" viewBox="0 0 14 10"><path d="M1 1 H13 L7 9 Z" fill="#8a8a8a" /></svg>
        </div>
        <div className="flex text-[32px] leading-[49px]">
          <span className="ml-[21px] text-[#c8393b]">MA5:4.217万</span>
          <span className="ml-[18px] text-[#b29a6a]">10:4.745万</span>
          <span className="ml-[18px] text-[#6a86cc]">20:4.786万</span>
        </div>
      </div>
      <VolumeChart />
      <Tools />
      <SectorTabs />
      <BottomBar />
    </div>
  );
}
